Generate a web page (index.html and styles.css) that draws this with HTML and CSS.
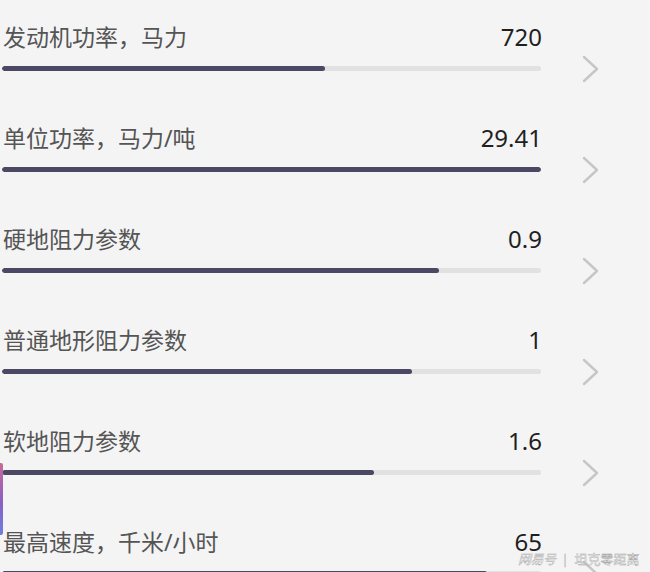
FILE: index.html
```html
<!DOCTYPE html>
<html lang="zh-CN">
<head>
    <meta charset="UTF-8">
    <meta name="viewport" content="width=device-width, initial-scale=1.0">
    <title>坦克性能参数</title>
    <link rel="stylesheet" href="styles.css">
</head>
<body>
    <div class="side-tab"></div>

    <div class="stat-list">
        <div class="stat-row">
            <div class="stat-main">
                <div class="stat-head">
                    <span class="stat-label">发动机功率，马力</span>
                    <span class="stat-value">720</span>
                </div>
                <div class="stat-track"><div class="stat-fill" style="width: 60%"></div></div>
            </div>
            <svg class="chevron" viewBox="0 0 18 28"><path d="M2 2 L15 14 L2 26"/></svg>
        </div>

        <div class="stat-row">
            <div class="stat-main">
                <div class="stat-head">
                    <span class="stat-label">单位功率，马力/吨</span>
                    <span class="stat-value">29.41</span>
                </div>
                <div class="stat-track"><div class="stat-fill" style="width: 100%"></div></div>
            </div>
            <svg class="chevron" viewBox="0 0 18 28"><path d="M2 2 L15 14 L2 26"/></svg>
        </div>

        <div class="stat-row">
            <div class="stat-main">
                <div class="stat-head">
                    <span class="stat-label">硬地阻力参数</span>
                    <span class="stat-value">0.9</span>
                </div>
                <div class="stat-track"><div class="stat-fill" style="width: 81.1%"></div></div>
            </div>
            <svg class="chevron" viewBox="0 0 18 28"><path d="M2 2 L15 14 L2 26"/></svg>
        </div>

        <div class="stat-row">
            <div class="stat-main">
                <div class="stat-head">
                    <span class="stat-label">普通地形阻力参数</span>
                    <span class="stat-value">1</span>
                </div>
                <div class="stat-track"><div class="stat-fill" style="width: 76.1%"></div></div>
            </div>
            <svg class="chevron" viewBox="0 0 18 28"><path d="M2 2 L15 14 L2 26"/></svg>
        </div>

        <div class="stat-row">
            <div class="stat-main">
                <div class="stat-head">
                    <span class="stat-label">软地阻力参数</span>
                    <span class="stat-value">1.6</span>
                </div>
                <div class="stat-track"><div class="stat-fill" style="width: 69%"></div></div>
            </div>
            <svg class="chevron" viewBox="0 0 18 28"><path d="M2 2 L15 14 L2 26"/></svg>
        </div>

        <div class="stat-row">
            <div class="stat-main">
                <div class="stat-head">
                    <span class="stat-label">最高速度，千米/小时</span>
                    <span class="stat-value">65</span>
                </div>
                <div class="stat-track"><div class="stat-fill" style="width: 90%"></div></div>
            </div>
            <svg class="chevron" viewBox="0 0 18 28"><path d="M2 2 L15 14 L2 26"/></svg>
        </div>
    </div>

    <!-- Watermark -->
    <div class="watermark">
        <span class="wm-brand">网易号</span>
        <span class="wm-sep">|</span>
        <span>坦克零距离</span>
    </div>
</body>
</html>
```

FILE: styles.css
```css
:root {
    --bg: #f4f4f4;
    --label: #555555;
    --value: #1f1f1f;
    --fill: #4a4862;
    --track: #e1e1e1;
    --chevron: #c6c6c6;
}

* {
    margin: 0;
    padding: 0;
    box-sizing: border-box;
}

html, body {
    height: 100%;
}

body {
    font-family: "Noto Sans", "Noto Sans CJK SC", sans-serif;
    background: var(--bg);
    overflow: hidden;
    position: relative;
}

.stat-list {
    display: flex;
    flex-direction: column;
    gap: 52px;
    padding: 22px 0 0 2px;
}

.stat-row {
    display: flex;
    align-items: flex-end;
}

.stat-main {
    width: 539px;
}

.stat-head {
    display: flex;
    justify-content: space-between;
    align-items: baseline;
    height: 30px;
    line-height: 30px;
    margin-bottom: 14px;
}

.stat-label {
    font-size: 23px;
    color: var(--label);
    padding-left: 1px;
}

.stat-value {
    font-size: 24px;
    color: var(--value);
    margin-right: -1px;
}

.stat-track {
    height: 5px;
    border-radius: 3px;
    background: var(--track);
    overflow: hidden;
}

.stat-fill {
    height: 100%;
    border-radius: 3px;
    background: var(--fill);
}

.chevron {
    width: 18px;
    height: 28px;
    margin-left: 41px;
    margin-bottom: -12px;
    flex-shrink: 0;
}

.chevron path {
    fill: none;
    stroke: var(--chevron);
    stroke-width: 2.4;
    stroke-linecap: round;
    stroke-linejoin: round;
}

.side-tab {
    position: absolute;
    left: 0;
    top: 463px;
    width: 3px;
    height: 72px;
    border-radius: 0 2px 2px 0;
    background: linear-gradient(#c8689a, #8a5fc4 55%, #6f7ee0);
}

.watermark {
    position: absolute;
    left: 518px;
    top: 549px;
    display: flex;
    align-items: center;
    gap: 4px;
    font-size: 13px;
    line-height: 20px;
    color: rgba(255, 255, 255, 0.9);
    -webkit-text-stroke: 0.4px #a0a0a0;
    white-space: nowrap;
}

.wm-brand {
    font-style: italic;
    letter-spacing: -0.5px;
}

.wm-sep {
    font-weight: 300;
    padding: 0 2px;
}
```
